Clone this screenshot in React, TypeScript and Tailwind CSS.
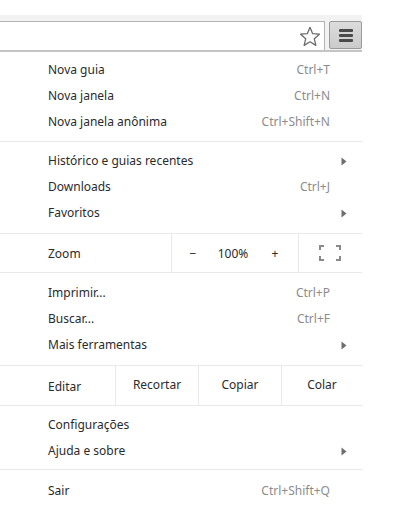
const font = { fontFamily: '"Noto Sans", "DejaVu Sans", sans-serif' };

function Arrow() {
  return (
    <svg width="6" height="9" viewBox="0 0 6 9" className="block">
      <path d="M0.5 0.5 L5.5 4.5 L0.5 8.5 Z" fill="#6e6e6e" />
    </svg>
  );
}

function Item({ label, shortcut, sub }: { label: string; shortcut?: string; sub?: boolean }) {
  return (
    <div className="flex h-[26px] items-center pl-[48px] pr-[32px] pt-[2px]">
      <span className="flex-1 text-[#2b2b2b]">{label}</span>
      {shortcut && <span className="text-[#8c8c8c]">{shortcut}</span>}
      {sub && (
        <span className="-mr-[17px]">
          <Arrow />
        </span>
      )}
    </div>
  );
}

function Sep() {
  return <div className="h-px bg-[#e9e9e9]" />;
}

function FullscreenIcon() {
  return (
    <svg width="22" height="16" viewBox="0 0 22 16" className="block">
      <g fill="none" stroke="#8a8a8a" strokeWidth="2">
        <path d="M1 5 V1 H5" />
        <path d="M17 1 H21 V5" />
        <path d="M1 11 V15 H5" />
        <path d="M17 15 H21 V11" />
      </g>
    </svg>
  );
}

export default function App() {
  return (
    <div className="min-h-screen bg-white text-[12px] leading-none" style={font}>
      <div className="w-[362px]">
        <div className="h-[15px]" />
        {/* toolbar */}
        <div className="flex bg-[#f2f2f2] pt-[6px]">
          <div className="flex h-[29px] flex-1 items-center justify-end border-t border-r border-[#b4b4b4] bg-white pr-[3px]">
            <svg width="22" height="21" viewBox="0 0 24 23" className="block">
              <path
                d="M12 1.5 L14.9 8.4 L22.3 9 L16.7 13.9 L18.4 21.2 L12 17.3 L5.6 21.2 L7.3 13.9 L1.7 9 L9.1 8.4 Z"
                fill="white"
                stroke="#6a6a6a"
                strokeWidth="1.4"
                strokeLinejoin="round"
              />
            </svg>
          </div>
          <div className="ml-[4px] flex h-[28px] w-[33px] items-center justify-center rounded-[2px] border border-[#9a9a9a] bg-gradient-to-b from-[#dcdcdc] to-[#cbcbcb]">
            <div className="flex flex-col gap-[2px]">
              <div className="h-[3px] w-[14px] rounded-[1px] bg-[#4a4a4a]" />
              <div className="h-[3px] w-[14px] rounded-[1px] bg-[#4a4a4a]" />
              <div className="h-[3px] w-[14px] rounded-[1px] bg-[#4a4a4a]" />
            </div>
          </div>
        </div>
        <div className="h-[2px] bg-[#c4c4c4]" />

        {/* menu */}
        <div className="pt-[4px] pb-[7px]">
          <Item label="Nova guia" shortcut="Ctrl+T" />
          <Item label="Nova janela" shortcut="Ctrl+N" />
          <Item label="Nova janela anônima" shortcut="Ctrl+Shift+N" />
        </div>
        <Sep />
        <div className="pt-[5px] pb-[8px]">
          <Item label="Histórico e guias recentes" sub />
          <Item label="Downloads" shortcut="Ctrl+J" />
          <Item label="Favoritos" sub />
        </div>
        <Sep />
        <div className="flex h-[38px] items-stretch pt-[2px]">
          <div className="flex w-[171px] items-center pl-[48px] text-[#2b2b2b]">Zoom</div>
          <div className="-mt-[2px] flex w-[127px] items-center border-l border-[#e9e9e9] pt-[2px] text-[#2b2b2b]">
            <span className="w-[42px] text-center">−</span>
            <span className="flex-1 text-center">100%</span>
            <span className="w-[46px] text-center">+</span>
          </div>
          <div className="-mt-[2px] flex flex-1 items-center justify-center border-l border-[#e9e9e9] pr-[2px]">
            <FullscreenIcon />
          </div>
        </div>
        <Sep />
        <div className="pt-[6px] pb-[8px]">
          <Item label="Imprimir..." shortcut="Ctrl+P" />
          <Item label="Buscar..." shortcut="Ctrl+F" />
          <Item label="Mais ferramentas" sub />
        </div>
        <Sep />
        <div className="flex h-[39px] items-stretch text-[#2b2b2b]">
          <div className="flex w-[115px] items-center pl-[48px] pt-[2px]">Editar</div>
          <div className="flex w-[83px] items-center justify-center border-l border-[#e9e9e9] pb-[2px]">Recortar</div>
          <div className="flex w-[83px] items-center justify-center border-l border-[#e9e9e9] pb-[2px]">Copiar</div>
          <div className="flex flex-1 items-center justify-center border-l border-[#e9e9e9] pb-[2px]">Colar</div>
        </div>
        <Sep />
        <div className="pt-[5px] pb-[6px]">
          <Item label="Configurações" />
          <Item label="Ajuda e sobre" sub />
        </div>
        <Sep />
        <div className="pt-[7px]">
          <Item label="Sair" shortcut="Ctrl+Shift+Q" />
        </div>
      </div>
    </div>
  );
}
